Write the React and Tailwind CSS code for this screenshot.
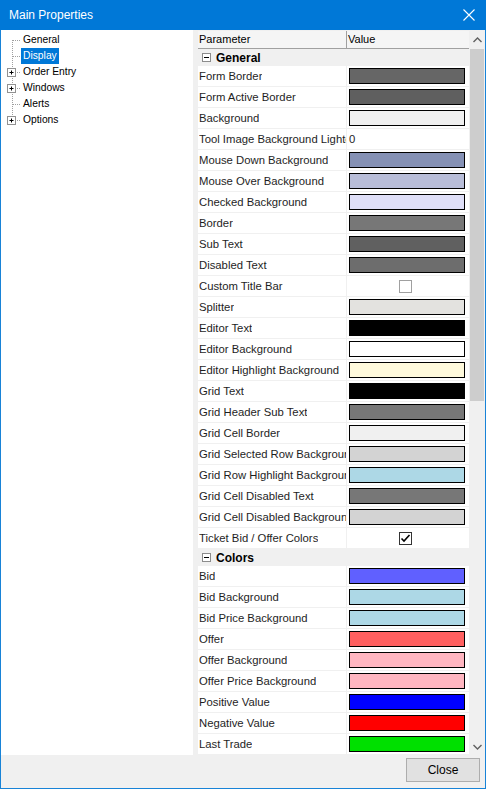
import React from 'react';

const font = { fontFamily: '"Liberation Sans", Arial, sans-serif' };

const general = [
    ['Form Border', '#666666'],
    ['Form Active Border', '#5f5f5f'],
    ['Background', '#f0f0f0'],
    ['Tool Image Background Lighten', 'text:0'],
    ['Mouse Down Background', '#8591b5'],
    ['Mouse Over Background', '#b8bdd8'],
    ['Checked Background', '#dedef7'],
    ['Border', '#777777'],
    ['Sub Text', '#606060'],
    ['Disabled Text', '#6d6d6d'],
    ['Custom Title Bar', 'check:0'],
    ['Splitter', '#e3e2df'],
    ['Editor Text', '#000000'],
    ['Editor Background', '#ffffff'],
    ['Editor Highlight Background', '#fffadc'],
    ['Grid Text', '#000000'],
    ['Grid Header Sub Text', '#777777'],
    ['Grid Cell Border', '#f0f0f0'],
    ['Grid Selected Row Background', '#d3d3d3'],
    ['Grid Row Highlight Background', '#add8e6'],
    ['Grid Cell Disabled Text', '#777777'],
    ['Grid Cell Disabled Background', '#d3d3d3'],
    ['Ticket Bid / Offer Colors', 'check:1'],
];

const colors = [
    ['Bid', '#6060ff'],
    ['Bid Background', '#add8e6'],
    ['Bid Price Background', '#add8e6'],
    ['Offer', '#ff6060'],
    ['Offer Background', '#ffb6c1'],
    ['Offer Price Background', '#ffb6c1'],
    ['Positive Value', '#0000ff'],
    ['Negative Value', '#ff0000'],
    ['Last Trade', '#00e000'],
];

const treeItems = [
    { label: 'General', plus: false },
    { label: 'Display', plus: false, selected: true },
    { label: 'Order Entry', plus: true },
    { label: 'Windows', plus: true },
    { label: 'Alerts', plus: false },
    { label: 'Options', plus: true },
];

const Checkbox = ({ checked }) => (
    <div className={`w-[13px] h-[13px] border bg-white flex items-center justify-center ${checked ? 'border-[#333333]' : 'border-[#a0a0a0]'}`}>
        {checked && (
            <svg width="11" height="11" viewBox="0 0 11 11">
                <path d="M1.5 5.5 L4 8 L9.5 2" stroke="#000" strokeWidth="1.6" fill="none" />
            </svg>
        )}
    </div>
);

const ValueCell = ({ value }) => {
    if (value.startsWith('text:')) {
        return <span className="pl-[2px] text-[#1e1e1e]">{value.slice(5)}</span>;
    }
    if (value.startsWith('check:')) {
        return (
            <div className="w-[116px] flex justify-center">
                <Checkbox checked={value === 'check:1'} />
            </div>
        );
    }
    return <div className="ml-[2px] w-[116px] h-[16px] border border-black" style={{ backgroundColor: value }} />;
};

const Row = ({ name, value }) => (
    <div className="flex h-[21px] border-b border-[#f0f0f0] bg-white">
        <div className="w-[149px] shrink-0 pl-[1px] flex items-center overflow-hidden whitespace-nowrap text-[#1e1e1e] border-r border-[#f0f0f0]">
            <span className="block overflow-hidden">{name}</span>
        </div>
        <div className="flex-1 flex items-center">
            <ValueCell value={value} />
        </div>
    </div>
);

const Category = ({ label }) => (
    <div className="flex items-center h-[17px] bg-[#f0f0f0] -ml-[5px] pl-[9px]">
        <div className="w-[9px] h-[9px] border border-[#8c8c8c] bg-white flex items-center justify-center">
            <div className="w-[5px] h-[1px] bg-black" />
        </div>
        <span className="ml-[5px] font-bold text-black text-[12px]">{label}</span>
    </div>
);

const TreeLines = () => (
    <svg className="absolute left-0 top-0" width="22" height="96" viewBox="0 0 22 96">
        <line x1="11.5" y1="8" x2="11.5" y2="88" stroke="#a0a0a0" strokeDasharray="1 1" />
        {treeItems.map((item, i) => (
            <line key={i} x1="12" y1={i * 16 + 8.5} x2="20" y2={i * 16 + 8.5} stroke="#a0a0a0" strokeDasharray="1 1" />
        ))}
        {treeItems.map((item, i) =>
            item.plus ? (
                <g key={'p' + i}>
                    <rect x="6.5" y={i * 16 + 4.5} width="8" height="8" fill="#fff" stroke="#919191" />
                    <line x1="8.5" y1={i * 16 + 8.5} x2="12.5" y2={i * 16 + 8.5} stroke="#000" />
                    <line x1="10.5" y1={i * 16 + 6.5} x2="10.5" y2={i * 16 + 10.5} stroke="#000" />
                </g>
            ) : null
        )}
    </svg>
);

const App = () => {
    return (
        <div className="w-[486px] h-[789px] flex flex-col border border-[#1883d7] border-t-0 bg-[#f0f0f0] text-[11.3px] select-none" style={font}>
            {/* title bar */}
            <div className="h-[30px] shrink-0 bg-[#0078d7] -mx-[1px] flex items-center justify-between pl-[9px] pr-[10px]">
                <span className="text-white text-[12px]">Main Properties</span>
                <svg width="12" height="12" viewBox="0 0 12 12" className="mr-[1px]">
                    <path d="M0.5 0.5 L11.5 11.5 M11.5 0.5 L0.5 11.5" stroke="#fff" strokeWidth="1.1" />
                </svg>
            </div>

            <div className="flex h-[725px]">
                {/* tree */}
                <div className="w-[192px] bg-white relative pt-[2px] text-[10.3px]">
                    <div className="relative">
                        <TreeLines />
                        {treeItems.map((item) => (
                            <div key={item.label} className="h-[16px] flex items-center pl-[20px]">
                                <span className={`px-[2px] h-[16px] leading-[16px] ${item.selected ? 'bg-[#0078d7] text-white' : 'text-black'}`}>
                                    {item.label}
                                </span>
                            </div>
                        ))}
                    </div>
                </div>

                {/* property grid */}
                <div className="w-[5px] bg-[#f0f0f0]" />
                <div className="w-[271px] flex flex-col overflow-hidden pt-[1px]">
                    <div className="flex h-[18px] bg-[#f5f5f5] border-b border-[#a0a0a0] -ml-[1px] pl-[1px] text-[11px]">
                        <div className="w-[149px] border-r border-[#a0a0a0] pl-[1px] leading-[17px] text-black">Parameter</div>
                        <div className="flex-1 pl-[1px] leading-[17px] text-black">Value</div>
                    </div>
                    <Category label="General" />
                    {general.map(([n, v]) => (
                        <Row key={n} name={n} value={v} />
                    ))}
                    <Category label="Colors" />
                    {colors.map(([n, v]) => (
                        <Row key={n} name={n} value={v} />
                    ))}
                </div>

                {/* scrollbar */}
                <div className="w-[16px] bg-[#f0f0f0] flex flex-col">
                    <div className="h-[19px] flex items-center justify-center">
                        <svg width="9" height="6" viewBox="0 0 9 6">
                            <path d="M0.5 5 L4.5 1 L8.5 5" stroke="#606060" strokeWidth="1.4" fill="none" />
                        </svg>
                    </div>
                    <div className="flex-1 px-[1px]">
                        <div className="h-[352px] bg-[#cdcdcd]" />
                    </div>
                    <div className="h-[17px] flex items-center justify-center">
                        <svg width="9" height="6" viewBox="0 0 9 6">
                            <path d="M0.5 1 L4.5 5 L8.5 1" stroke="#606060" strokeWidth="1.4" fill="none" />
                        </svg>
                    </div>
                </div>
            </div>

            {/* footer */}
            <div className="flex-1 flex justify-end items-start pt-[3px] pr-[5px]">
                <button className="w-[74px] h-[24px] bg-[#e1e1e1] border border-[#adadad] text-black text-[12px]" style={font}>
                    Close
                </button>
            </div>
        </div>
    );
};

export default App;
